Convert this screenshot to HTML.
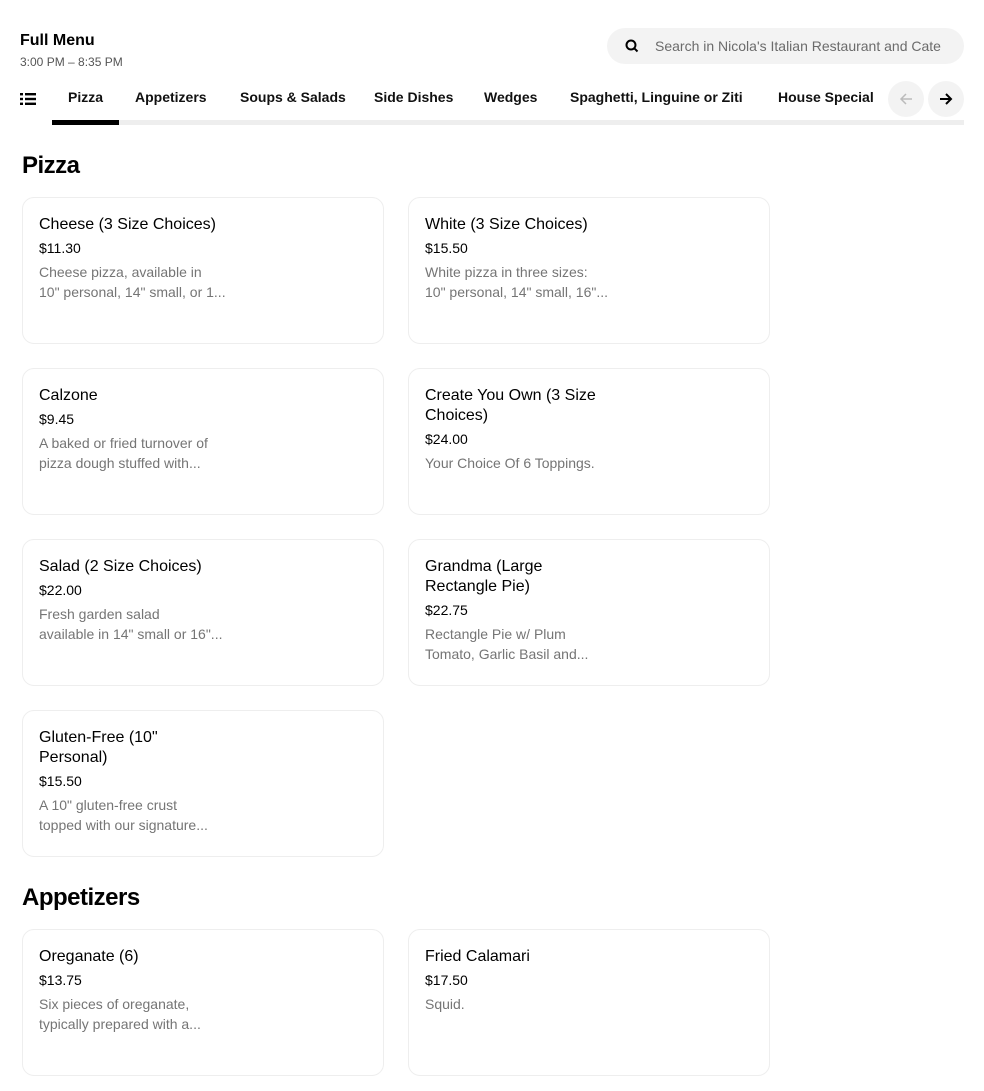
<!DOCTYPE html>
<html><head><meta charset="utf-8"><style>
*{margin:0;padding:0;box-sizing:border-box}
body{width:984px;height:1091px;overflow:hidden;background:#fff;font-family:"Liberation Sans",sans-serif;color:#000;position:relative}
.abs{position:absolute}
.card{position:absolute;width:362px;height:147px;border:1px solid #eee;border-radius:12px;padding:17px 16px}
.t{font-size:16px;line-height:20px;font-weight:500;width:185px;color:#000}
.p{font-size:14px;line-height:20px;margin-top:3px}
.d{font-size:14px;line-height:20px;color:#757575;margin-top:4px;white-space:nowrap}
.tab{position:absolute;top:89px;font-size:14px;font-weight:600;color:#111}
h2{position:absolute;left:22px;font-size:24px;font-weight:700;letter-spacing:-0.5px}
</style></head><body>
<div class="abs" style="left:20px;top:32px;font-size:16px;font-weight:600">Full Menu</div>
<div class="abs" style="left:20px;top:55px;font-size:12px;color:#555">3:00 PM – 8:35 PM</div>
<div class="abs" style="left:607px;top:28px;width:357px;height:36px;border-radius:18px;background:#f3f3f3"></div>
<svg class="abs" style="left:624px;top:38px" width="16" height="16" viewBox="0 0 16 16"><circle cx="7" cy="7" r="4.5" fill="none" stroke="#000" stroke-width="2"/><path d="M10 10l3.5 3.5" stroke="#000" stroke-width="2"/></svg>
<div class="abs" style="left:655px;top:38px;font-size:14px;color:#6b6b6b;white-space:nowrap;width:292px;overflow:hidden">Search in Nicola's Italian Restaurant and Cate</div>
<svg class="abs" style="left:20px;top:92px" width="16" height="14" viewBox="0 0 16 14"><rect x="0" y="1" width="3" height="2.4"/><rect x="5" y="1" width="11" height="2.4"/><rect x="0" y="5.8" width="3" height="2.4"/><rect x="5" y="5.8" width="11" height="2.4"/><rect x="0" y="10.6" width="3" height="2.4"/><rect x="5" y="10.6" width="11" height="2.4"/></svg>
<div class="tab" style="left:68px">Pizza</div>
<div class="tab" style="left:135px">Appetizers</div>
<div class="tab" style="left:240px">Soups &amp; Salads</div>
<div class="tab" style="left:374px">Side Dishes</div>
<div class="tab" style="left:484px">Wedges</div>
<div class="tab" style="left:570px">Spaghetti, Linguine or Ziti</div>
<div class="tab" style="left:778px">House Special</div>
<div class="abs" style="left:52px;top:120px;width:912px;height:5px;background:#eee"></div>
<div class="abs" style="left:52px;top:120px;width:67px;height:5px;background:#000"></div>
<div class="abs" style="left:888px;top:81px;width:36px;height:36px;border-radius:50%;background:#f3f3f3"></div>
<div class="abs" style="left:928px;top:81px;width:36px;height:36px;border-radius:50%;background:#f3f3f3"></div>
<svg class="abs" style="left:898px;top:91px" width="16" height="16" viewBox="0 0 16 16"><path d="M14 8H3M8 3L3 8l5 5" fill="none" stroke="#bbb" stroke-width="1.5"/></svg>
<svg class="abs" style="left:938px;top:91px" width="16" height="16" viewBox="0 0 16 16"><path d="M2 8h11M8 3l5 5-5 5" fill="none" stroke="#000" stroke-width="2"/></svg>
<h2 style="top:152px">Pizza</h2>
<div class="card" style="left:22px;top:197px"><div class="t">Cheese (3 Size Choices)</div><div class="p">$11.30</div><div class="d">Cheese pizza, available in<br>10" personal, 14" small, or 1...</div></div>
<div class="card" style="left:408px;top:197px"><div class="t">White (3 Size Choices)</div><div class="p">$15.50</div><div class="d">White pizza in three sizes:<br>10" personal, 14" small, 16"...</div></div>
<div class="card" style="left:22px;top:368px"><div class="t">Calzone</div><div class="p">$9.45</div><div class="d">A baked or fried turnover of<br>pizza dough stuffed with...</div></div>
<div class="card" style="left:408px;top:368px"><div class="t">Create You Own (3 Size Choices)</div><div class="p">$24.00</div><div class="d">Your Choice Of 6 Toppings.</div></div>
<div class="card" style="left:22px;top:539px"><div class="t">Salad (2 Size Choices)</div><div class="p">$22.00</div><div class="d">Fresh garden salad<br>available in 14" small or 16"...</div></div>
<div class="card" style="left:408px;top:539px"><div class="t">Grandma (Large Rectangle Pie)</div><div class="p">$22.75</div><div class="d">Rectangle Pie w/ Plum<br>Tomato, Garlic Basil and...</div></div>
<div class="card" style="left:22px;top:710px"><div class="t">Gluten-Free (10" Personal)</div><div class="p">$15.50</div><div class="d">A 10" gluten-free crust<br>topped with our signature...</div></div>
<h2 style="top:884px">Appetizers</h2>
<div class="card" style="left:22px;top:929px"><div class="t">Oreganate (6)</div><div class="p">$13.75</div><div class="d">Six pieces of oreganate,<br>typically prepared with a...</div></div>
<div class="card" style="left:408px;top:929px"><div class="t">Fried Calamari</div><div class="p">$17.50</div><div class="d">Squid.</div></div>
</body></html>
